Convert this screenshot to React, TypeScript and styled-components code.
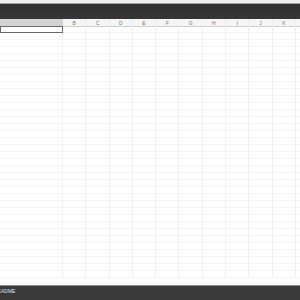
import React from 'react';
import styled, {createGlobalStyle} from 'styled-components';

const GlobalStyle = createGlobalStyle`
  html, body {
    margin: 0;
    padding: 0;
    background: #fff;
    font-family: "Liberation Sans", Arial, sans-serif;
  }
  #root {
    height: 300px;
    overflow: hidden;
  }
`;

const Page = styled.div`
  display: flex;
  flex-direction: column;
  height: 300px;
  width: 300px;
  overflow: hidden;
`;

const TopStrip = styled.div`
  height: 3px;
  background: #f0f0f0;
  border-bottom: 1px solid #a0a0a0;
`;

const Toolbar = styled.div`
  height: 15px;
  background: linear-gradient(#2e2e2e, #363636);
`;

const Grid = styled.div`
  flex: 1;
  display: grid;
  grid-template-columns: 63px repeat(11, 23.3px);
  grid-auto-rows: 7px;
  overflow: hidden;
  align-content: start;
`;

const HeaderCell = styled.div<{$active?: boolean}>`
  height: 8px;
  background: ${p => (p.$active ? '#d2d2d2' : '#f5f5f5')};
  border-bottom: 1px solid #cfcfcf;
  border-right: 1px solid ${p => (p.$active ? '#d2d2d2' : '#ededed')};
  box-sizing: border-box;
  font-size: 5px;
  line-height: 8px;
  color: #777;
  text-align: center;
`;

const Cell = styled.div<{$selected?: boolean}>`
  box-sizing: border-box;
  border-right: 1px solid #f1f1f1;
  border-bottom: 1px solid #f5f5f5;
  ${p => p.$selected && `
    border: 1px solid #6a6a6a;
  `}
`;

const Footer = styled.div`
  height: 14px;
  background: #3a3a3a;
  border-top: 1px solid #8c8c8c;
  display: flex;
  align-items: flex-start;
  overflow: hidden;
`;

const SheetTab = styled.div`
  margin-left: -7px;
  padding: 0 1px;
  border-top: 1px solid #dcdcdc;
  margin-top: -1px;
  font-size: 5px;
  line-height: 11px;
  color: #e0e0e0;
`;

const columns = ['', 'B', 'C', 'D', 'E', 'F', 'G', 'H', 'I', 'J', 'K', ''];
const ROWS = 36;

export default function App() {
  return (
    <Page>
      <GlobalStyle />
      <TopStrip />
      <Toolbar />
      <Grid>
        {columns.map((c, i) => (
          <HeaderCell key={`h${i}`} $active={i === 0}>{c}</HeaderCell>
        ))}
        {Array.from({length: ROWS}).map((_, r) =>
          columns.map((_, c) => (
            <Cell key={`${r}-${c}`} $selected={r === 0 && c === 0} />
          )),
        )}
      </Grid>
      <Footer>
        <SheetTab>README</SheetTab>
      </Footer>
    </Page>
  );
}
